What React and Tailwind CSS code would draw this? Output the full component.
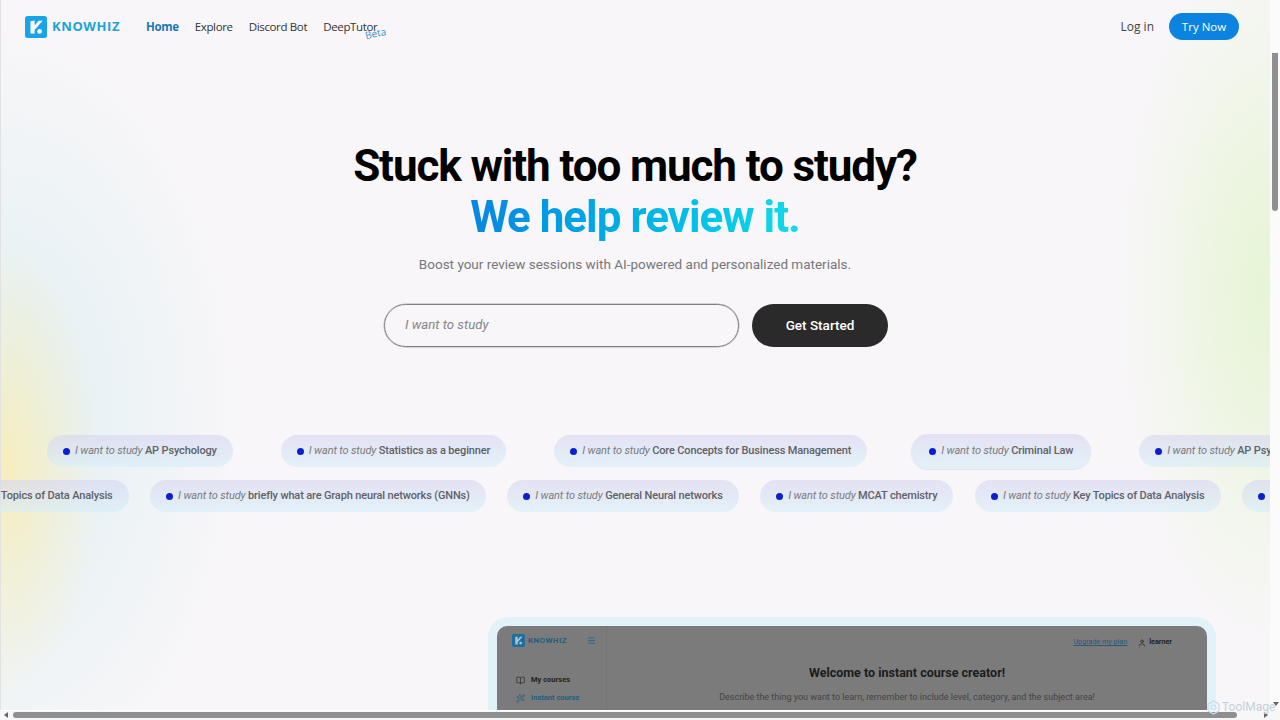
import React from 'react';
import { BookOpen, Menu, User, WandSparkles } from 'lucide-react';

const ROW_ONE = [
  { topic: 'AP Psychology' },
  { topic: 'Statistics as a beginner' },
  { topic: 'Core Concepts for Business Management' },
  { topic: 'Criminal Law', big: true },
  { topic: 'AP Psychology' },
];

const ROW_TWO = [
  { topic: 'Key Topics of Data Analysis' },
  { topic: 'briefly what are Graph neural networks (GNNs)' },
  { topic: 'General Neural networks' },
  { topic: 'MCAT chemistry' },
  { topic: 'Key Topics of Data Analysis' },
  { topic: 'briefly what are Graph neural networks (GNNs)' },
];

const Logo = ({ size, color = '#1ba3e8', ink = '#fff' }) => (
  <svg width={size} height={size} viewBox="0 0 22 22" className="shrink-0">
    <rect width="22" height="22" rx="2.5" fill={color} />
    <path d="M5.5 5.2 L9.6 4.4 V9.6 L13.6 4.8 H17.6 L12.2 11 L9.6 13.8 V17.6 H5.5 Z" fill={ink} />
    <circle cx="14.6" cy="15.4" r="2.3" fill={ink} />
  </svg>
);

const Pill = ({ topic, big }) => (
  <div
    className={`flex shrink-0 items-center rounded-full bg-gradient-to-b from-[#d6d4f0]/60 to-[#d6eef9]/60 tracking-[-0.15px] ${
      big ? '-ml-1 h-[35px] px-[18px] shadow-[0_1px_1px_rgba(205,215,235,0.6)]' : 'h-[32px] px-4'
    }`}
  >
    <span className="mr-[5px] h-[7px] w-[7px] rounded-full bg-[#0a1fd0]" />
    <span className="text-[11px] italic text-[#7b7b80]">I want to study&nbsp;</span>
    <span className="text-[11px] font-medium text-[#5f6166]">{topic}</span>
  </div>
);

const Preview = () => (
  <div className="ml-[488px] mt-[105px] w-[728px] rounded-t-[20px] bg-[#e1f3f9] px-[9px] pt-[9px]">
    <div className="flex h-[90px] overflow-hidden rounded-t-[10px] bg-[#7b7b7b]">
      <div className="w-[110px] shrink-0 border-r border-[#747474] pl-[15px] pt-[8px]">
        <div className="flex h-[13px] items-center">
          <Logo size={13} color="#1f6f9a" ink="#a9c4d2" />
          <span className="ml-[3px] text-[8px] font-bold tracking-[0.4px] text-[#1f5f80]">KNOWHIZ</span>
          <Menu size={9} className="ml-[20px] text-[#1f5f80]" />
        </div>
        <div className="mt-[24px] flex h-[18px] items-center pl-[4px] text-[7.5px] font-bold text-[#222]">
          <BookOpen size={9} className="mr-[6px] text-[#333]" />
          My courses
        </div>
        <div className="flex h-[18px] items-center pl-[4px] text-[7.5px] font-bold text-[#1f5f80]">
          <WandSparkles size={9} className="mr-[6px]" />
          Instant course
        </div>
      </div>
      <div className="flex-1">
        <div className="flex h-[28px] items-center justify-end pr-[35px] pt-[5px] text-[7.2px]">
          <span className="text-[#245a7a] underline">Upgrade my plan</span>
          <User size={8} className="ml-[11px] mr-[3px] text-[#222]" />
          <span className="font-bold text-[#222]">learner</span>
        </div>
        <div className="mt-[10px] text-center text-[12.5px] font-bold text-[#1c1c1c]">
          Welcome to instant course creator!
        </div>
        <div className="mt-[8px] text-center text-[9px] text-[#444]">
          Describe the thing you want to learn, remember to include level, category, and the subject area!
        </div>
      </div>
    </div>
  </div>
);

const App = () => {
  return (
    <div className="relative h-[720px] w-[1280px] overflow-hidden bg-[#fbfbfb] font-['Roboto',sans-serif]">
      <div className="relative h-[710px] w-[1270px] overflow-hidden bg-[#f8f6f8]">
        <div className="absolute inset-0 bg-[radial-gradient(ellipse_100px_230px_at_0_470px,rgba(250,238,185,0.95),rgba(250,238,185,0)),radial-gradient(ellipse_240px_390px_at_0_420px,rgba(218,238,242,0.85),rgba(218,238,242,0)),radial-gradient(ellipse_150px_350px_at_1270px_290px,rgba(230,245,212,1),rgba(230,245,212,0))]" />
        <div className="absolute left-0 top-0 h-full w-px bg-[#e2e2e2]" />

        <div className="relative">
          <nav className="flex h-[53px] items-center pl-[25px] pr-[31px] font-['Open_Sans',sans-serif]">
            <Logo size={22} />
            <span className="ml-[5px] text-[13px] font-bold tracking-[0.6px] text-[#1ba3dc]">KNOWHIZ</span>
            <ul className="ml-[26px] flex items-center gap-4 text-[11.5px] tracking-[-0.35px] text-[#333]">
              <li className="font-bold text-[#1877b8]">Home</li>
              <li>Explore</li>
              <li>Discord Bot</li>
              <li className="relative">
                DeepTutor
                <span className="absolute left-[42px] top-[8px] -rotate-12 text-[10px] tracking-normal text-[#3f8fc9]">Beta</span>
              </li>
            </ul>
            <span className="ml-auto text-[12px] text-[#444]">Log in</span>
            <button className="ml-[15px] h-[27px] w-[70px] rounded-full bg-[#0a84e0] text-[11.5px] text-white">
              Try Now
            </button>
          </nav>

          <main>
            <h1 className="mt-[87px] text-center text-[44px] font-bold leading-[52px] tracking-[-1.1px] text-black">
              Stuck with too much to study?
            </h1>
            <h2 className="flex justify-center text-[44px] font-bold leading-[51px] tracking-[-1px]">
              <span className="bg-gradient-to-r from-[#0a86e2] to-[#12dbe8] bg-clip-text text-transparent">
                We help review it.
              </span>
            </h2>
            <p className="mt-[11px] text-center text-[13.5px] leading-[20px] text-[#77777b]">
              Boost your review sessions with AI-powered and personalized materials.
            </p>
            <div className="ml-[384px] mt-[30px] flex gap-[13px]">
              <input
                placeholder="I want to study"
                className="h-[43px] w-[355px] rounded-full border border-[#808080] bg-transparent pb-[2px] pl-5 text-[13.2px] italic shadow-[0_0_0_0.5px_#b0b0b0] outline-none placeholder:text-[#85858a]"
              />
              <button className="h-[43px] w-[136px] rounded-full bg-[#2a2a2a] text-[13.5px] font-medium text-white">
                Get Started
              </button>
            </div>

            <div className="mt-[88px] flex h-[32px] items-center gap-[48px] pl-[47px]">
              {ROW_ONE.map((item, i) => (
                <Pill key={i} topic={item.topic} big={item.big} />
              ))}
            </div>
            <div className="ml-[-117px] mt-[13px] flex gap-[21.5px]">
              {ROW_TWO.map((item, i) => (
                <Pill key={i} topic={item.topic} />
              ))}
            </div>

            <Preview />
          </main>
        </div>
      </div>

      {/* fake browser scrollbars and the video watermark sit on top of the page */}
      <div className="absolute left-[1272px] top-[53px] h-[158px] w-[6px] rounded-b-full bg-[#8f8f8f]" />
      <div className="absolute bottom-0 left-0 h-[10px] w-full border-t border-white bg-[#f7f6f8]">
        <div className="absolute left-[13px] top-[1px] h-[6px] w-[1224px] rounded-full bg-[#8f8f8f]" />
        <div className="absolute left-[4px] top-[1px] h-0 w-0 border-y-[3px] border-r-[4px] border-y-transparent border-r-[#666]" />
        <div className="absolute left-[1264px] top-[1px] h-0 w-0 border-y-[3px] border-l-[4px] border-y-transparent border-l-[#666]" />
      </div>
      <div className="absolute left-[1273px] top-[702px] h-0 w-0 border-x-[3px] border-t-[4px] border-x-transparent border-t-[#666]" />
      <div className="absolute left-[1206px] top-[698px] flex items-center text-[12px] text-[#c3d0dc]">
        <svg width="15" height="15" viewBox="0 0 15 15" fill="none" stroke="#c3dcf0" strokeWidth="1.2">
          <path d="M7.5 1 L13 4.2 V10.8 L7.5 14 L2 10.8 V4.2 Z" />
          <circle cx="7.5" cy="7.5" r="2.5" />
        </svg>
        <span className="ml-[1px]">ToolMage</span>
      </div>
    </div>
  );
};

export default App;
